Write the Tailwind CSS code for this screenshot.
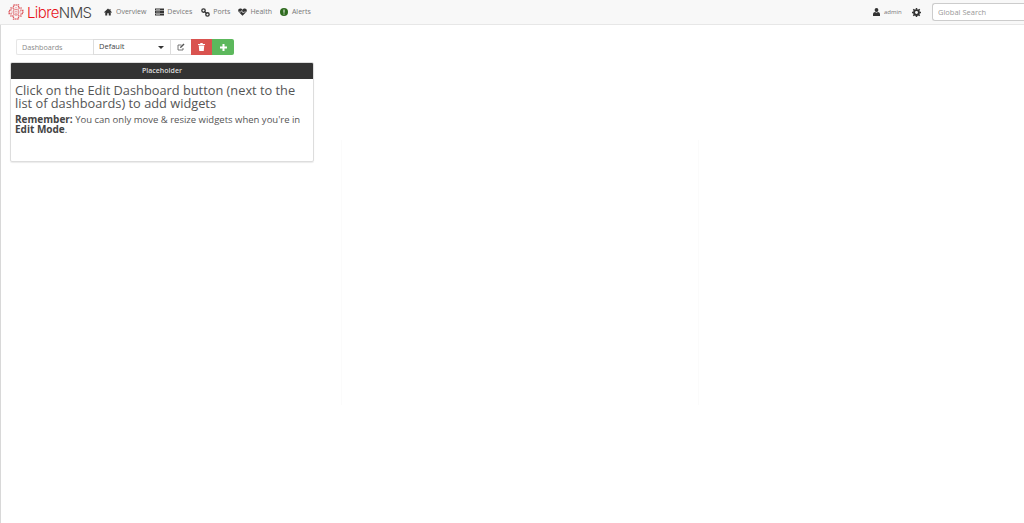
<!DOCTYPE html>
<html>
<head>
<meta charset="utf-8">
<script src="https://cdn.jsdelivr.net/npm/@tailwindcss/browser@4"></script>
</head>
<body class="relative h-[523px] w-[1024px] overflow-hidden bg-white font-['Open_Sans',sans-serif] text-[#555]">
<div class="absolute left-0 top-[25px] h-[498px] w-px bg-[#d8d8d8]"></div>
<div class="absolute left-[341px] top-[140px] h-[265px] w-px bg-[#fbfbfb]"></div>
<div class="absolute left-[698px] top-[140px] h-[265px] w-px bg-[#fbfbfb]"></div>
<nav class="flex h-[25px] items-center border-b border-[#e7e7e7] bg-[#f8f8f8] pl-2">
  <div class="flex w-[96px] items-center">
    <svg class="h-[16px] w-[16px] shrink-0" viewBox="0 0 16 16" fill="none" stroke="#dd5a60" stroke-width="1.300"><path d="M5.500 1h5v3h2.500v2.500h2v3h-2V12h-2.500v3h-5v-3H3V9.500H1v-3h2V4h2.500Z" stroke-dasharray="1.300 .7"/><path d="M5.500 5.500h5v5h-5z" stroke-dasharray="1 1"/><path d="M8 3v10M3.500 8h9" stroke-width=".7" stroke-dasharray="1 1"/></svg>
    <span class="ml-[3px] font-['Inter',sans-serif] text-[15px] font-light leading-none tracking-[-0.6px]"><span class="text-[#e8141c]">Libre</span><span class="text-[#444]">NMS</span></span>
  </div>
  <div class="flex items-center text-[7px] text-[#777]">
    <svg class="h-[8px] w-[8px]" viewBox="0 0 16 16" fill="#333"><path d="M8 1 0 8.500l1 1L2.500 8.200V15h4v-4.500h3V15h4V8.200L15 9.500l1-1L13 5.700V2h-2v1.800Z"/></svg>
    <span class="ml-[4px]">Overview</span>
    <svg class="ml-[9px] h-[8px] w-[9px]" viewBox="0 0 18 16" fill="#333"><path d="M0 1h18v4H0zM0 6h18v4H0zM0 11h18v4H0z"/><path d="M2 2.500h8v1H2zM2 7.500h8v1H2zM2 12.500h8v1H2z" fill="#f8f8f8"/></svg>
    <span class="ml-[3px]">Devices</span>
    <svg class="ml-[9px] h-[9px] w-[9px]" viewBox="0 0 16 16" fill="none" stroke="#333" stroke-width="2.400"><circle cx="4.500" cy="4.500" r="3"/><circle cx="11.500" cy="11.500" r="3"/><path d="M6 6l4 4"/></svg>
    <span class="ml-[3px]">Ports</span>
    <svg class="ml-[8px] h-[8px] w-[9px]" viewBox="0 0 18 16"><path d="M9 15.500 1.500 8C-1 5 1 1 4.500 1 6.500 1 8 2 9 3.500 10 2 11.500 1 13.500 1 17 1 19 5 16.500 8Z" fill="#333"/><path d="M2 8h4l1.500-3 2.500 5 1.500-2h4.500" fill="none" stroke="#f8f8f8" stroke-width="1.200"/></svg>
    <span class="ml-[3px]">Health</span>
    <svg class="ml-[8px] h-[8px] w-[8px]" viewBox="0 0 16 16"><circle cx="8" cy="8" r="8" fill="#2f6b1f"/><path d="M7 3h2v6.500H7zM7 11h2v2H7z" fill="#f8f8f8"/></svg>
    <span class="ml-[4px]">Alerts</span>
  </div>
  <div class="ml-auto flex items-center">
    <svg class="h-[8px] w-[7px]" viewBox="0 0 14 16" fill="#333"><circle cx="7" cy="4" r="3.800"/><path d="M0 16v-3.500C0 9.500 2.500 8 4 8l3 1.500L10 8c1.500 0 4 1.500 4 4.500V16Z"/></svg>
    <span class="ml-[4px] w-[20px] text-[6px] text-[#777]">admin</span>
    <svg class="ml-[8px] h-[9px] w-[9px]" viewBox="0 0 16 16" fill="none" stroke="#333"><circle cx="8" cy="8" r="4.300" stroke-width="3.400"/><path d="M8 0v3M8 13v3M0 8h3M13 8h3M2.300 2.300l2.200 2.200M11.500 11.500l2.200 2.200M2.300 13.700l2.200-2.200M11.500 4.500l2.200-2.200" stroke-width="2.600"/></svg>
    <input class="ml-[11px] h-[18px] w-[92px] rounded-l-[3px] border border-r-0 border-[#ccc] bg-white pl-[5px] text-[7.500px] text-[#555] placeholder:text-[#999]" placeholder="Global Search">
  </div>
</nav>
<div class="ml-[16px] mt-[14px] flex h-[16px] w-[218px] text-[7.500px]">
  <div class="flex w-[77px] items-center rounded-l-[2px] border border-r-0 border-[#e6e6e6] pl-[5px] text-[7.200px] text-[#8a8a8a]">Dashboards</div>
  <div class="flex w-[77px] items-center justify-between border border-r-0 border-[#ddd] pl-[5px] pr-[6px] text-[#444]">Default<span class="h-0 w-0 border-x-[3px] border-t-[3px] border-x-transparent border-t-[#333]"></span></div>
  <div class="flex w-[21px] items-center justify-center border border-r-0 border-[#ddd]">
    <svg class="h-[8px] w-[8px]" viewBox="0 0 16 16" fill="none" stroke="#555" stroke-width="1.600"><path d="M12 10v4H2V4h7"/><path d="M6 10l.5-2.500L13 1l2 2-6.500 6.500Z" fill="#555" stroke="none"/></svg>
  </div>
  <div class="flex w-[21px] items-center justify-center bg-[#d9534f]">
    <svg class="h-[8px] w-[7px]" viewBox="0 0 14 16" fill="#fff"><path d="M5 0h4l1 2h4v2H0V2h4ZM1.500 5h11l-1 11h-9Z"/></svg>
  </div>
  <div class="flex w-[22px] items-center justify-center rounded-r-[2px] bg-[#5cb85c]">
    <svg class="h-[7px] w-[7px]" viewBox="0 0 14 14" fill="#fff"><path d="M5 0h4v5h5v4H9v5H5V9H0V5h5Z"/></svg>
  </div>
</div>
<section class="ml-[10px] mt-[7px] h-[100px] w-[304px] overflow-hidden rounded-[2px] border border-[#ddd] shadow-[0_1px_1px_rgba(0,0,0,0.08)]">
  <header class="flex h-[16px] items-center justify-center bg-[#333] text-[7px] font-semibold text-[#ddd]">Placeholder</header>
  <div class="pl-[4px] pt-[5px]">
    <h3 class="whitespace-nowrap text-[12.800px] leading-[12.500px] text-[#555]">Click on the Edit Dashboard button (next to the<br>list of dashboards) to add widgets</h3>
    <p class="mt-[6px] whitespace-nowrap text-[9.500px] leading-[9.500px] text-[#555]"><strong class="text-[10px] text-[#444]">Remember:</strong> You can only move &amp; resize widgets when you're in<br><strong class="text-[10px] text-[#444]">Edit Mode</strong>.</p>
  </div>
</section>
</body>
</html>
